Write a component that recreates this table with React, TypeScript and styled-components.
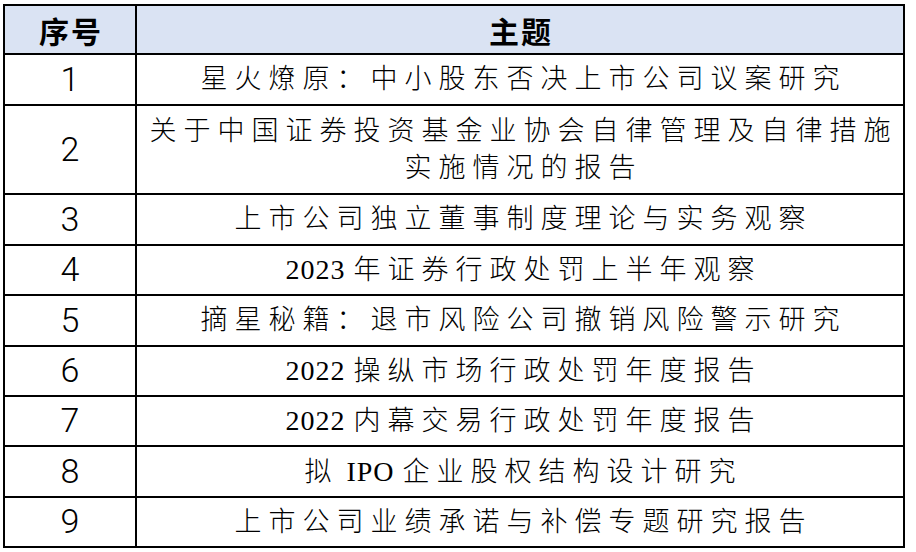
import styled, { createGlobalStyle } from 'styled-components'

const GlobalStyle = createGlobalStyle`
  html, body {
    margin: 0;
    padding: 0;
    background: #fff;
  }
`

const Page = styled.div`
  padding: 4px 0 0 3px;
`

const Table = styled.table`
  border-collapse: collapse;
  table-layout: fixed;
  width: 902px;
  color: #000;
`

const Row = styled.tr<{ $h: number }>`
  height: ${(p) => p.$h}px;
`

const HeadCell = styled.th<{ $w?: number }>`
  ${(p) => (p.$w ? `width: ${p.$w}px;` : '')}
  border: 2px solid #000;
  background: #dae3f3;
  font-family: "Noto Sans CJK SC", sans-serif;
  font-weight: 700;
  font-size: 30px;
  letter-spacing: 2px;
  padding: 0 0 0 2px;
  line-height: 1;
  text-align: center;
  vertical-align: middle;
`

const NumCell = styled.td`
  border: 2px solid #000;
  font-family: Roboto, "Liberation Sans", sans-serif;
  font-size: 34px;
  font-weight: 300;
  text-align: center;
  vertical-align: middle;
  padding: 0 0 2px 0;
  line-height: 1;
`

const TopicCell = styled.td`
  border: 2px solid #000;
  font-family: "Liberation Serif", "Noto Sans CJK SC", serif;
  font-size: 27px;
  font-weight: 300;
  letter-spacing: 7px;
  text-align: center;
  vertical-align: middle;
  padding: 0 0 0 7px;
  line-height: 37px;
`

const Latin = styled.span`
  font-size: 28px;
  font-weight: 400;
  letter-spacing: 1px;
`

const Line = styled.div`
  white-space: nowrap;
`

const rows: { lines: string[]; h: number }[] = [
  { lines: ['星火燎原：中小股东否决上市公司议案研究'], h: 51 },
  { lines: ['关于中国证券投资基金业协会自律管理及自律措施', '实施情况的报告'], h: 89 },
  { lines: ['上市公司独立董事制度理论与实务观察'], h: 51 },
  { lines: ['2023 年证券行政处罚上半年观察'], h: 50 },
  { lines: ['摘星秘籍：退市风险公司撤销风险警示研究'], h: 51 },
  { lines: ['2022 操纵市场行政处罚年度报告'], h: 50 },
  { lines: ['2022 内幕交易行政处罚年度报告'], h: 50 },
  { lines: ['拟 IPO 企业股权结构设计研究'], h: 51 },
  { lines: ['上市公司业绩承诺与补偿专题研究报告'], h: 50 },
]

// ascii runs (with their spaces) get the serif latin face with tight spacing
const renderText = (text: string) =>
  text.split(/( ?[A-Za-z0-9]+ ?)/).filter(Boolean).map((part, i) =>
    /[A-Za-z0-9]/.test(part) ? <Latin key={i}>{part}</Latin> : <span key={i}>{part}</span>
  )

const App = () => {
  return (
    <Page>
      <GlobalStyle />
      <Table>
        <tbody>
          <Row $h={49}>
            <HeadCell $w={128}>序号</HeadCell>
            <HeadCell>主题</HeadCell>
          </Row>
          {rows.map((r, i) => (
            <Row $h={r.h} key={i}>
              <NumCell>{i + 1}</NumCell>
              <TopicCell>
                {r.lines.map((l, j) => (
                  <Line key={j}>{renderText(l)}</Line>
                ))}
              </TopicCell>
            </Row>
          ))}
        </tbody>
      </Table>
    </Page>
  )
}

export default App
